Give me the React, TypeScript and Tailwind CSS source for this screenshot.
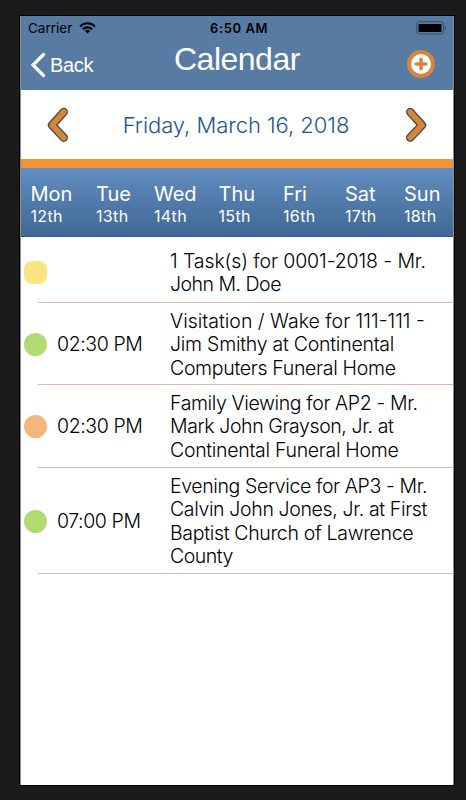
import clsx from "clsx";

const days = [
  { name: "Mon", date: "12th", width: "w-[65.5px]" },
  { name: "Tue", date: "13th", width: "w-[58px]" },
  { name: "Wed", date: "14th", width: "w-[64.5px]" },
  { name: "Thu", date: "15th", width: "w-[64.5px]" },
  { name: "Fri", date: "16th", width: "w-[62px]" },
  { name: "Sat", date: "17th", width: "w-[59px]" },
  { name: "Sun", date: "18th", width: "w-[49px]" },
];

const events = [
  {
    time: "",
    dot: "rounded-[8px] bg-[#fce482]",
    height: "h-[66px]",
    textPad: "pt-[6px]",
    dotPad: "mt-[5px]",
    lines: [
      { text: "1 Task(s) for 0001-2018 - Mr.", tracking: "tracking-[-0.1px]" },
      { text: "John M. Doe", tracking: "tracking-[-0.5px]" },
    ],
  },
  {
    time: "02:30 PM",
    dot: "rounded-full bg-[#b0db72]",
    height: "h-[82px]",
    textPad: "pt-[2px]",
    dotPad: "",
    lines: [
      { text: "Visitation / Wake for 111-111 -", tracking: "tracking-[0px]" },
      { text: "Jim Smithy at Continental", tracking: "tracking-[-0.25px]" },
      { text: "Computers Funeral Home", tracking: "tracking-[-0.32px]" },
    ],
  },
  {
    time: "02:30 PM",
    dot: "rounded-full bg-[#f5b57e]",
    height: "h-[83px]",
    textPad: "pt-[1px]",
    dotPad: "",
    lines: [
      { text: "Family Viewing for AP2 - Mr.", tracking: "tracking-[-0.38px]" },
      { text: "Mark John Grayson, Jr. at", tracking: "tracking-[-0.4px]" },
      { text: "Continental Funeral Home", tracking: "tracking-[-0.3px]" },
    ],
  },
  {
    time: "07:00 PM",
    dot: "rounded-full bg-[#b0db72]",
    height: "h-[106px]",
    textPad: "pt-[1px]",
    dotPad: "",
    lines: [
      { text: "Evening Service for AP3 - Mr.", tracking: "tracking-[-0.38px]" },
      { text: "Calvin John Jones, Jr. at First", tracking: "tracking-[-0.36px]" },
      { text: "Baptist Church of Lawrence", tracking: "tracking-[-0.32px]" },
      { text: "County", tracking: "tracking-[-0.5px]" },
    ],
  },
];

function WifiIcon() {
  return (
    <svg width="17" height="12" viewBox="0 0 17 12" fill="none" stroke="#000" strokeWidth="2.1">
      <path d="M1 4.4a10.6 10.6 0 0 1 15 0" />
      <path d="M3.8 7.3a6.6 6.6 0 0 1 9.4 0" />
      <path d="M8.5 11.6 5.9 9a3.7 3.7 0 0 1 5.2 0z" fill="#000" stroke="none" />
    </svg>
  );
}

function BatteryIcon() {
  return (
    <svg width="31" height="14" viewBox="0 0 31 14" fill="none">
      <rect x="0.7" y="0.7" width="26.8" height="12.4" rx="2.8" stroke="#35506d" />
      <rect x="2.5" y="2.9" width="23" height="8" rx="0.6" fill="#000" />
      <path d="M29 5v4c1.4-.5 1.4-3.5 0-4z" fill="#2c4159" />
    </svg>
  );
}

function AddIcon() {
  return (
    <svg width="28" height="28" viewBox="0 0 28 28">
      <circle cx="14" cy="14" r="14" fill="#d3863c" />
      <circle cx="14" cy="14" r="10" fill="#fff" />
      <path d="M14 9.2v9.6M9.2 14h9.6" stroke="#d3863c" strokeWidth="3.6" strokeLinecap="round" />
    </svg>
  );
}

function Arrow({ flip = false }: { flip?: boolean }) {
  return (
    <svg width="22" height="36" viewBox="0 0 22 36" fill="none" className={clsx(flip && "-scale-x-100")}>
      <g strokeLinecap="round" strokeLinejoin="round">
        <path d="M16.8 5 5 18.1l11.8 12.6" stroke="#4a4744" strokeWidth="8.4" />
        <path d="M16.8 5 5 18.1l11.8 12.6" stroke="#d3863c" strokeWidth="5.8" />
      </g>
    </svg>
  );
}

export default function App() {
  return (
    <div className="h-[800px] w-[466px] bg-[#1b1b1b] pt-[15px] pl-[19px] font-['Inter',sans-serif]">
      <div className="h-[771px] w-[436px] border border-black">
        <div className="flex h-[769px] flex-col border-x border-[#8d9194] bg-white">
          {/* status bar + nav bar */}
          <header className="h-[74px] bg-[#587ba3]">
            <div className="flex h-6 items-center pr-[6px] pl-[7px] text-[13.5px] text-black">
              <span className="w-[51px]">Carrier</span>
              <WifiIcon />
              <span className="ml-[114px] flex-1 pt-px text-[13px] font-semibold tracking-[0.6px] whitespace-nowrap">6:50 AM</span>
              <BatteryIcon />
            </div>
            <div className="flex h-[50px] pl-[10px] font-['Liberation_Sans',sans-serif] text-white">
              <svg width="15" height="26" viewBox="0 0 15 26" fill="none" className="mt-[12px]">
                <path d="M12.5 2.5 2 13l10.5 10.5" stroke="#fff" strokeWidth="3.2" strokeLinecap="round" />
              </svg>
              <span className="mt-[10px] ml-1 w-[124px] text-[20px] leading-[30px] tracking-[-0.3px]">Back</span>
              <h1 className="w-[233px] text-[32px] leading-[39px] tracking-[-0.5px]">Calendar</h1>
              <div className="mt-[10px]">
                <AddIcon />
              </div>
            </div>
          </header>

          {/* date switcher */}
          <div className="flex h-[69px] items-center justify-between pr-[26px] pl-[26px]">
            <Arrow />
            <span className="pt-px pr-[2px] text-[22px] font-[350] tracking-[-0.05px] whitespace-nowrap text-[#1d568f]">
              Friday, March 16, 2018
            </span>
            <Arrow flip />
          </div>
          <div className="h-[9px] bg-[#f29435]" />

          {/* week strip */}
          <div className="flex h-[69px] border-b border-[#30608f] bg-linear-to-b from-[#628dc1] to-[#416894] pt-[14px] pl-[9.5px] text-white">
            {days.map((day) => (
              <div key={day.name} className={clsx("shrink-0", day.width)}>
                <div className="text-[20px] leading-[24px]">{day.name}</div>
                <div className="text-[16px] leading-[20px] tracking-[0.35px]">{day.date}</div>
              </div>
            ))}
          </div>

          <ul>
            {events.map((event) => (
              <li key={event.lines[0].text} className={clsx("flex items-center pl-[3px]", event.height)}>
                <span className={clsx("h-[23px] w-[23px] shrink-0", event.dot, event.dotPad)} />
                <span className="w-[123px] shrink-0 pt-px pl-[10px] text-[19.5px] font-[350] tracking-[-0.4px] text-black">
                  {event.time}
                </span>
                <div
                  className={clsx(
                    "relative flex h-full flex-1 flex-col justify-center text-[19.5px] leading-[23.4px] font-[350] text-black",
                    event.textPad,
                  )}
                >
                  {event.lines.map((line) => (
                    <span key={line.text} className={clsx("whitespace-nowrap", line.tracking)}>
                      {line.text}
                    </span>
                  ))}
                  <i className="absolute right-0 bottom-0 -left-[132px] h-px bg-[#e2b9a3]" />
                </div>
              </li>
            ))}
          </ul>
        </div>
      </div>
    </div>
  );
}
